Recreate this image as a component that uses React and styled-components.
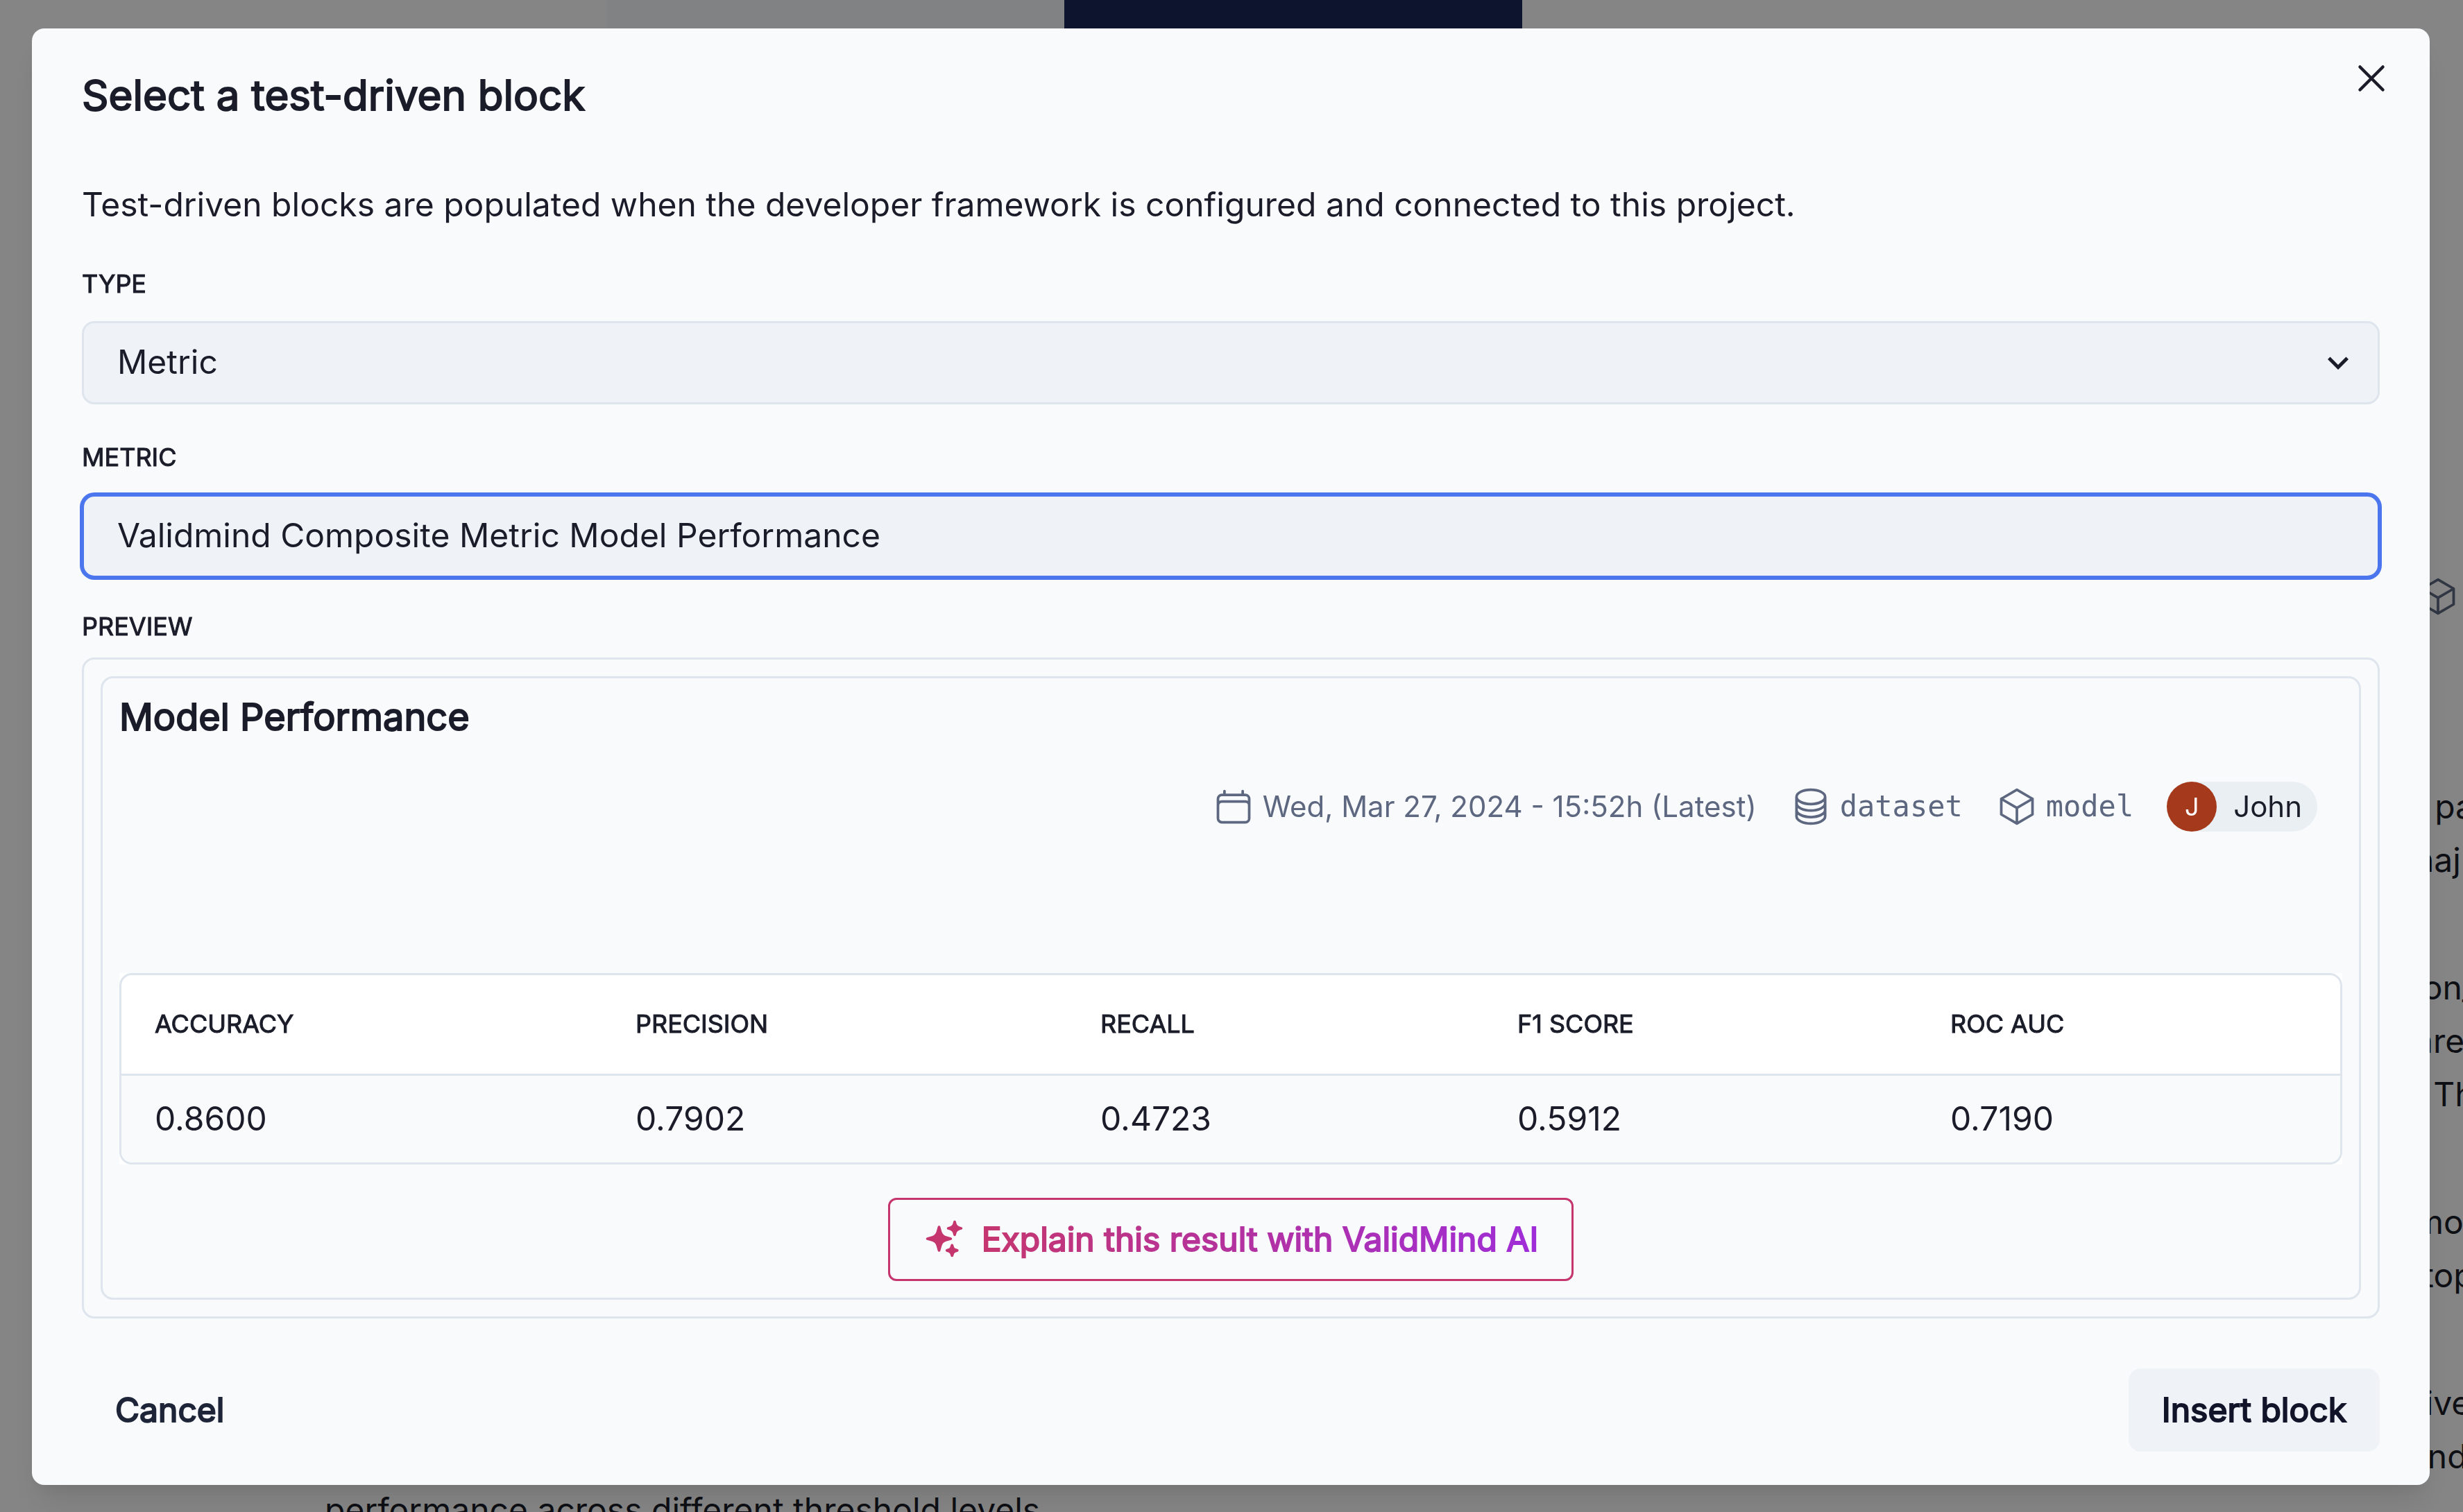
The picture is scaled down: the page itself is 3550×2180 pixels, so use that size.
import React, { useState } from "react";
import styled, { createGlobalStyle } from "styled-components";
import {
  HiOutlineCalendar,
  HiOutlineCircleStack,
  HiOutlineCube,
  HiSparkles,
} from "react-icons/hi2";

const GlobalStyle = createGlobalStyle`
  *, *::before, *::after { box-sizing: border-box; }
  html, body { margin: 0; height: 100%; overflow: hidden; }
  body {
    background: #ffffff;
    color: #1a1d29;
    font-family: Inter, "Liberation Sans", sans-serif;
    font-size: 48px;
    line-height: 77px;
  }
  h1, h2, p { margin: 0; }
  button, input, select { font: inherit; color: inherit; }
`;

const Page = styled.div`
  height: 100vh;
  overflow: hidden;
  display: flex;
  flex-direction: column;
`;

const TabStrip = styled.div`
  display: flex;
  justify-content: center;
  flex: none;
  height: 90px;
  padding-right: 482px;
`;

const TabBlock = styled.div`
  width: 660px;
  background: ${(p) => (p.$active ? "#1a2757" : "#f8fafe")};
`;

const PageBody = styled.div`
  display: flex;
  flex-direction: column;
  padding-left: 468px;
`;

const PageMeta = styled.div`
  display: flex;
  justify-content: flex-end;
  padding: 740px 6px 234px 0;
  color: #5d6880;
  svg { display: block; }
`;

const Excerpt = styled.div`
  align-self: flex-end;
  width: 70px;
  margin-bottom: 107px;
  white-space: pre;
`;

const LastExcerpt = styled(Excerpt)`
  margin-bottom: 0;
`;

const Backdrop = styled.div`
  position: fixed;
  inset: 0;
  display: flex;
  align-items: flex-start;
  padding: 41px 48px 39px 46px;
  background: rgba(0, 0, 0, 0.48);
`;

const Modal = styled.section`
  position: relative;
  flex: 1;
  min-width: 0;
  border-radius: 18px;
  background: #f8fafc;
  box-shadow: 0 30px 45px -9px rgba(0, 0, 0, 0.1), 0 12px 18px -6px rgba(0, 0, 0, 0.05);
`;

const Header = styled.header`
  padding: 48px 72px;
`;

/* Headings and buttons keep the regular cut's widths and are thickened by a stroke. */
const Title = styled.h1`
  font-size: 60px;
  line-height: 96px;
  font-weight: 400;
  -webkit-text-stroke: 2px currentColor;
`;

const CloseButton = styled.button`
  position: absolute;
  top: 24px;
  right: 36px;
  display: flex;
  align-items: center;
  justify-content: center;
  width: 96px;
  height: 96px;
  padding: 0;
  border: 0;
  border-radius: 18px;
  background: none;
`;

const Body = styled.div`
  display: flex;
  flex-direction: column;
  gap: 48px;
  padding: 24px 72px;
`;

const Intro = styled.p`
  line-height: 76px;
`;

const Field = styled.div`
  display: flex;
  flex-direction: column;
  gap: 26px;
`;

const PreviewField = styled(Field)`
  gap: 17px;
  margin-top: -6px;
`;

const labelText = `
  font-size: 36px;
  line-height: 56px;
  font-weight: 400;
  text-transform: uppercase;
  -webkit-text-stroke: 1px currentColor;
`;

const Label = styled.label`
  ${labelText}
`;

const PreviewLabel = styled.h2`
  ${labelText}
`;

const SelectWrap = styled.div`
  display: grid;
  align-items: center;
  > * { grid-area: 1 / 1; }
  svg { justify-self: end; margin-right: 30px; pointer-events: none; }
`;

const control = `
  width: 100%;
  height: 120px;
  padding: 0 48px 4px;
  border: 3px solid #dfe5ed;
  border-radius: 18px;
  background: #eff3f8;
  outline: none;
`;

const Select = styled.select`
  ${control}
  appearance: none;
`;

const TextInput = styled.input`
  ${control}
  border-color: #4c76ee;
  box-shadow: 0 0 0 3px #4c76ee;
`;

const Frame = styled.div`
  padding: 24px;
  border: 3px solid #dfe5ed;
  border-radius: 18px;
`;

const CardTitle = styled.h2`
  font-size: 54px;
  line-height: 64px;
  font-weight: 400;
  -webkit-text-stroke: 2px currentColor;
`;

const MetaRow = styled.div`
  display: flex;
  justify-content: flex-end;
  align-items: center;
  gap: 48px;
  padding: 61px 36px 204px 0;
  font-size: 42px;
  line-height: 72px;
  color: #5d6880;
`;

const MetaItem = styled.span`
  display: flex;
  align-items: center;
  gap: 12px;
  font-family: ${(p) => (p.$mono ? '"DejaVu Sans Mono", monospace' : "inherit")};
`;

const UserPill = styled.span`
  display: flex;
  gap: 24px;
  padding-right: 22px;
  border-radius: 36px;
  background: #eaeff4;
  color: #1a1d29;
`;

const Avatar = styled.span`
  width: 72px;
  height: 72px;
  border-radius: 50%;
  background: #a43a1b;
  color: #ffffff;
  font-size: 36px;
  text-align: center;
`;

const TableBox = styled.div`
  background: #ffffff;
`;

const TableFrame = styled.div`
  overflow: hidden;
  border: 3px solid #dfe5ed;
  border-radius: 18px;
`;

const Table = styled.table`
  width: 100%;
  border-spacing: 0;
  text-align: left;
`;

const Th = styled.th`
  width: ${(p) => p.$width}px;
  height: 145px;
  padding: 0 48px 2px;
  border-bottom: 3px solid #dfe5ed;
  ${labelText}
`;

const Td = styled.td`
  height: 125px;
  padding: 0 48px 2px;
  background: #f8fafc;
`;

const ExplainRow = styled.div`
  display: flex;
  justify-content: center;
  padding-top: 48px;
`;

const ExplainButton = styled.button`
  display: flex;
  align-items: center;
  gap: 24px;
  height: 120px;
  padding: 0 48px 2px;
  border: 3px solid #c5366f;
  border-radius: 12px;
  background: none;
  color: #c5366f;
`;

const GradientText = styled.span`
  background: linear-gradient(to right, #c5366f, #9f2dd8);
  background-clip: text;
  -webkit-background-clip: text;
  color: transparent;
  -webkit-text-stroke: 2px transparent;
`;

const Footer = styled.footer`
  display: flex;
  justify-content: space-between;
  padding: 48px 72px;
`;

const FooterButton = styled.button`
  height: 120px;
  padding: 0 48px 2px;
  border: 0;
  border-radius: 18px;
  background: ${(p) => (p.$filled ? "#eff3f8" : "none")};
  color: ${(p) => (p.$filled ? "#12152a" : "#1f2538")};
  -webkit-text-stroke: 2px currentColor;
`;

const excerpts = [
  ["t pa", "naj"],
  ["ion_", "are", ". Th"],
  ["mo", "ltop"],
];

const scores = [
  { name: "Accuracy", value: "0.8600", width: 693 },
  { name: "Precision", value: "0.7902", width: 670 },
  { name: "Recall", value: "0.4723", width: 601 },
  { name: "F1 Score", value: "0.5912", width: 624 },
  { name: "ROC AUC", value: "0.7190", width: 610 },
];

function Lines({ lines }) {
  return lines.map((line) => <div key={line}>{line}</div>);
}

export default function App() {
  const [metric, setMetric] = useState("Validmind Composite Metric Model Performance");

  return (
    <>
      <GlobalStyle />
      <Page>
        <TabStrip>
          <TabBlock />
          <TabBlock $active />
        </TabStrip>
        <PageBody>
          <PageMeta>
            <HiOutlineCube size={60} />
          </PageMeta>
          {excerpts.map((lines) => (
            <Excerpt key={lines[0]}>
              <Lines lines={lines} />
            </Excerpt>
          ))}
          <LastExcerpt>
            <Lines lines={["tive", "rnd"]} />
          </LastExcerpt>
          <p>performance across different threshold levels.</p>
        </PageBody>
      </Page>

      <Backdrop>
        <Modal role="dialog" aria-labelledby="dialog-title">
          <Header>
            <Title id="dialog-title">Select a test-driven block</Title>
          </Header>
          <CloseButton aria-label="Close">
            <svg width="72" height="72" viewBox="0 0 24 24" fill="none" stroke="currentColor" strokeWidth="1.5" strokeLinecap="round">
              <path d="M6.5 6.5l11 11M17.5 6.5l-11 11" />
            </svg>
          </CloseButton>

          <Body>
            <Intro>
              Test-driven blocks are populated when the developer framework is configured and
              connected to this project.
            </Intro>
            <Field>
              <Label htmlFor="type">Type</Label>
              <SelectWrap>
                <Select id="type" defaultValue="Metric">
                  <option>Metric</option>
                </Select>
                <svg width="60" height="60" viewBox="0 0 24 24" fill="currentColor">
                  <path d="M16.59 8.59L12 13.17 7.41 8.59 6 10l6 6 6-6z" />
                </svg>
              </SelectWrap>
            </Field>
            <Field>
              <Label htmlFor="metric">Metric</Label>
              <TextInput id="metric" value={metric} onChange={(e) => setMetric(e.target.value)} />
            </Field>
            <PreviewField>
              <PreviewLabel>Preview</PreviewLabel>
              <Frame>
                <Frame>
                  <CardTitle>Model Performance</CardTitle>
                  <MetaRow>
                    <MetaItem>
                      <HiOutlineCalendar size={60} />
                      Wed, Mar 27, 2024 - 15:52h (Latest)
                    </MetaItem>
                    <MetaItem $mono>
                      <HiOutlineCircleStack size={60} />
                      dataset
                    </MetaItem>
                    <MetaItem $mono>
                      <HiOutlineCube size={60} />
                      model
                    </MetaItem>
                    <UserPill>
                      <Avatar>J</Avatar>
                      John
                    </UserPill>
                  </MetaRow>
                  <TableBox>
                    <TableFrame>
                      <Table>
                        <thead>
                          <tr>
                            {scores.map(({ name, width }) => (
                              <Th key={name} scope="col" $width={width}>{name}</Th>
                            ))}
                          </tr>
                        </thead>
                        <tbody>
                          <tr>
                            {scores.map(({ name, value }) => (
                              <Td key={name}>{value}</Td>
                            ))}
                          </tr>
                        </tbody>
                      </Table>
                    </TableFrame>
                  </TableBox>
                  <ExplainRow>
                    <ExplainButton>
                      <HiSparkles size={60} />
                      <GradientText>Explain this result with ValidMind AI</GradientText>
                    </ExplainButton>
                  </ExplainRow>
                </Frame>
              </Frame>
            </PreviewField>
          </Body>

          <Footer>
            <FooterButton>Cancel</FooterButton>
            <FooterButton $filled>Insert block</FooterButton>
          </Footer>
        </Modal>
      </Backdrop>
    </>
  );
}
